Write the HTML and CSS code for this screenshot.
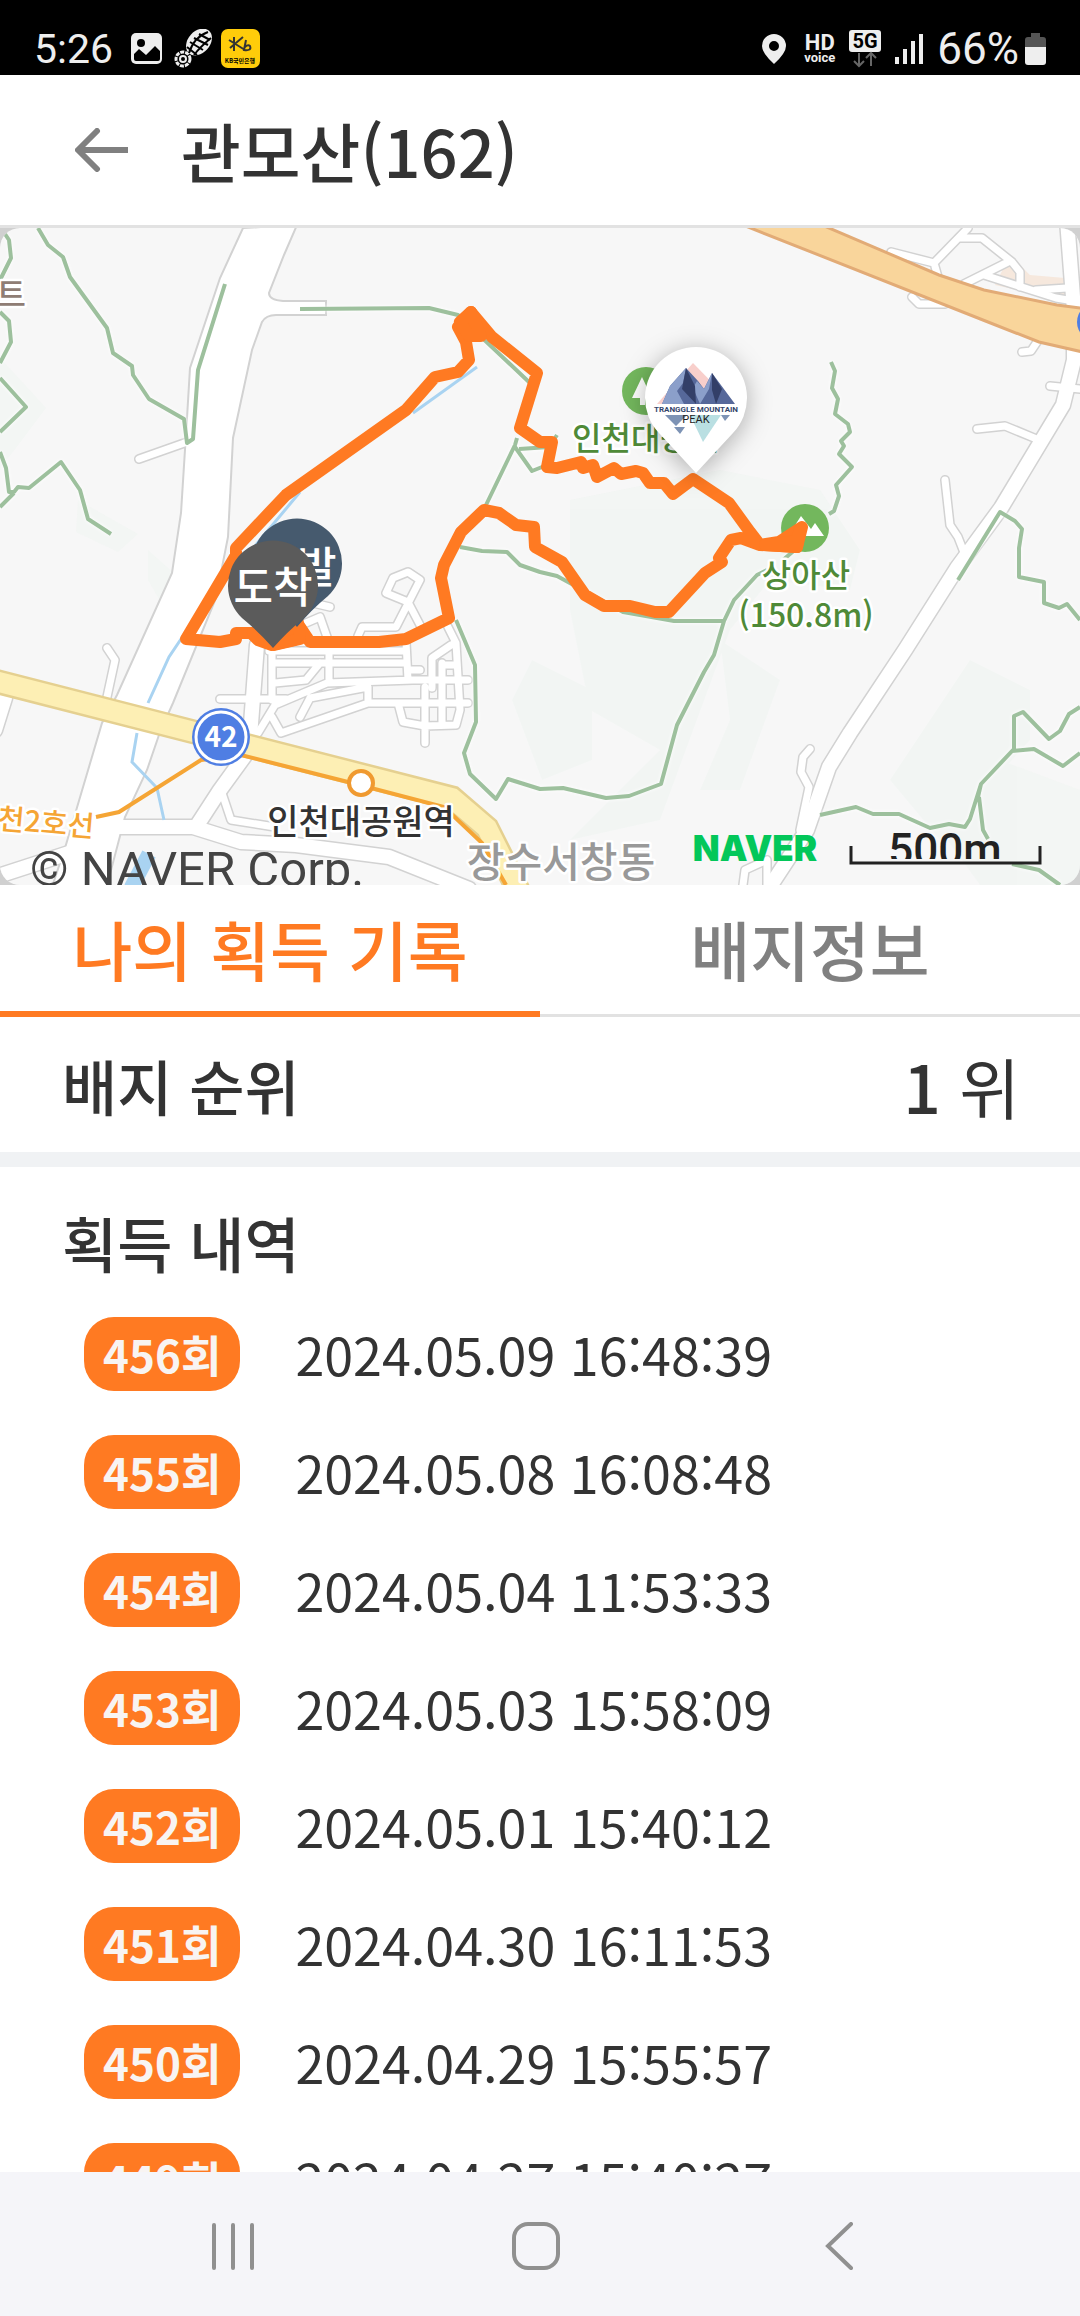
FILE: index.html
```html
<!DOCTYPE html>
<html lang="ko">
<head>
    <meta charset="UTF-8">
    <meta name="viewport" content="width=device-width, initial-scale=1.0">
    <title>관모산(162)</title>
    <link rel="stylesheet" href="styles.css">
</head>
<body>
    <div class="status-bar">
        <div class="status-left">
            <span class="clock">5:26</span>
            <svg width="31" height="31" viewBox="0 0 31 31">
                <rect width="31" height="31" rx="5" fill="#eee"/>
                <circle cx="10" cy="10" r="4" fill="#000"/>
                <path d="M3 21l5-5 7 6 9-9 5 5v8q0 2-2 2H5q-2 0-2-2z" fill="#000"/>
            </svg>
            <svg class="shoe" width="39" height="39" viewBox="0 0 39 39" fill="none" stroke="#eee">
                <circle cx="9" cy="30" r="7" stroke-width="3" stroke-dasharray="4 1"/>
                <circle cx="9" cy="30" r="3" stroke-width="2"/>
                <ellipse cx="25" cy="13" rx="11" ry="15" transform="rotate(42 25 13)" fill="#eee" stroke="none"/>
                <path d="M15 24Q20 8 34 3M20 26Q26 18 37 9M13 18l10 8M16 13l13 8M20 9l14 7M25 5l11 6" stroke="#000" stroke-width="2"/>
            </svg>
            <svg width="39" height="39" viewBox="0 0 39 39">
                <rect width="39" height="39" rx="7" fill="#ffcc0a"/>
                <path d="M13 8v14M8 11l16 10M22 8L9 19M25 11l-2 10q8 1 6-4-2-2-5 1" fill="none" stroke="#333" stroke-width="2"/>
                <text x="19" y="34" class="kb-text">KB국민은행</text>
            </svg>
        </div>
        <div class="status-right">
            <svg width="24" height="30" viewBox="0 0 24 30">
                <path fill-rule="evenodd" d="M12 0a12 12 0 0 1 12 12q0 7-12 18Q0 19 0 12A12 12 0 0 1 12 0zm0 7a5 5 0 1 0 0 10 5 5 0 0 0 0-10z" fill="#eee"/>
            </svg>
            <div class="hd"><b>HD</b><small>voice</small></div>
            <svg width="32" height="38" viewBox="0 0 32 38">
                <rect width="32" height="22" rx="3" fill="#eee"/>
                <text x="16" y="18" class="net-text">5G</text>
                <path d="M10 23v13M5 31l5 5 5-5M22 36V23M17 28l5-5 5 5" fill="none" stroke="#666" stroke-width="2"/>
            </svg>
            <svg width="28" height="30" viewBox="0 0 28 30" stroke="#eee" stroke-width="4">
                <path d="M2 23v7M10 15v15M18 7v23M26 0v30"/>
            </svg>
            <div class="battery">
                <span>66%</span>
                <svg width="21" height="32" viewBox="0 0 21 32">
                    <path d="M6 0h9v4h3q3 0 3 3v7H0V7q0-3 3-3h3z" fill="#555"/>
                    <path d="M0 14h21v15q0 3-3 3H3q-3 0-3-3z" fill="#eee"/>
                </svg>
            </div>
        </div>
    </div>

    <header class="header">
        <button class="back-btn" aria-label="뒤로">
            <svg width="54" height="44" viewBox="0 0 54 44" fill="none" stroke="#808080" stroke-width="6">
                <path d="M53 22H4"/>
                <path d="M22 3L3 22l19 19" stroke-linecap="round" stroke-linejoin="round"/>
            </svg>
        </button>
        <h1>관모산(162)</h1>
    </header>

    <div class="map">
        <svg viewBox="0 228 1080 657" role="img" aria-label="코스 지도">
            <defs>
                <!-- small streets are drawn twice: grey casing, then white on top -->
                <g id="streets">
                    <path d="M139 459L190 441M107 648l8 12-8 37M220 699h66M258 733l17-28M272 650v50M275 663h131M269 651h135M275 683l31-3 14-17M275 705l52-22 86-3 55 0M272 717l9 16 87-30h100M300 717l10-19M310 698l58-11v16M329 647v36M406 642l2 38M408 670h12M425 687v56M448 627l8 16 4 67-4 15-31 1-22-4-5-19M451 645l-19 13v30M442 663v62M442 665h15"/>
                    <path d="M358 636l4-9h34l24-47-12-8-15 6-7 15 22 9 12 23M306 623l14-6 7 20M313 603l17 4M222 793l9 27 44 7"/>
                    <path d="M891 252l43 11 34-35M960 238h22l30 24 8 10v15M934 263l4 14M964 284l44-22M984 275l72 23 24 4M1036 290l31-2M912 297l7 7h26M1022 352l9-1 8-12M1050 386l30 3M977 429l28-3 34 14M945 480l5 45 8 12 7 18M810 749l-7 8-2 15 8 15-9 43M743 885l2-15 22-10v25"/>
                </g>
                <path id="main-streets" d="M-5 877l74-24 45-26h79l48 15 55 3 93 12 80 32M257 645l-8 105-29 40-24 37M1067 220l7 90 0 50-11 45-62 103-44 60-52 82-55 83-21 34-22 63-36 55M-5 730l10-32"/>
            </defs>
            <rect y="228" width="1080" height="657" fill="#f7f7f7"/>

            <!-- terrain shading -->
            <g fill="#f0f5f2" opacity=".6">
                <path d="M0 358l26 28 20 22-30 40-16 20zM78 500l60 34-20 18-42-20zM148 550l45 40-5 60-40-70z"/>
                <path d="M570 500l150-30 100 20 40 60-10 40-80-10-40 50-70 190-90 20 50-50 40-40-70-40-20-100zM700 790l30-70-10-80 60 40-40 110zM930 720l40-60 60 30v50l-90 100-50-60z"/>
                <path d="M512 700l20-40 60 30v70l-50 20zM940 830l60-70 80 30v95H980z"/>
            </g>
            <path d="M995 285l15-30 20 20 35 3 5 20-40-5z" fill="#f6e8dd"/>

            <use href="#streets" class="casing"/>
            <use href="#main-streets" class="casing wide"/>
            <path d="M243 228l-23 50-30 90-3 50-6 95-9 60-55 122-15 28-37 125-15 45h55l20-76 22-47 13-38 13-29 43-105 12-61 5-99 19-88 10-28q4-7 14-7h50v-14h-43q-14-1-14-8l15-38 13-30z" class="big-road"/>
            <use href="#streets" class="road"/>
            <use href="#main-streets" class="road wide"/>

            <g fill="none" stroke="#a9d3f1" stroke-width="3">
                <path d="M477 367l-64 46M300 492l-50 60M234 560l-65 97-21 46M137 733l-5 29 25 26 7 32"/>
                <path d="M149 854l-18 34" stroke-width="15"/>
            </g>

            <path d="M822 225l117 50 45 15 73 15 30 4v44l-48-11-51-20-245-97z" fill="#f9d59b" stroke="#e2ab76" stroke-width="3"/>
            <path d="M-5 681l203 52 254 65 35 30 32 64" fill="none" stroke="#e5d090" stroke-width="25"/>
            <path d="M-5 681l203 52 254 65 35 30 32 64" fill="none" stroke="#fdefb4" stroke-width="20"/>
            <path d="M96 817l23-5 82-52 40-5 107 27 96 25 38 36 24 42" fill="none" stroke="#f5a535" stroke-width="4"/>

            <g class="trail">
                <path d="M38 228l10 17 15 12 7 20 37 51 6 25 19 13 1 9 16 24 35 20 3 24 6-4 5-69 27-86M300 309l129-1 29 7 72 68"/>
                <path d="M5 234l4 6 2 18-11 22M0 312l9 9 2 21-11 21M0 378l26 29-26 25M0 452l6 16 3 24h5l4-5 11 1 32-26 19 28 8 29 23 15M14 493L0 507"/>
                <path d="M517 438l-2 7-29 60M515 447l17 24 20-8M519 449l30-2 8-12M460 547l22 4 25 1 13 13 20 7 17 4 66 36 51 9h50"/>
                <path d="M767 570l-10 5-23 25-10 21-10 34-10 17-27 53-16 59-32 12-23 2-43-10-23 1-32-10-12 20-26-25-6-21 12-31-1-57-19-45M797 548l-14 12"/>
                <path d="M831 362l4 9-3 17 6 11-3 15 13 10 2 8-9 9 3 5-5 8 13 13-16 18 3 11-5 15-5 3"/>
                <path d="M958 580l42-68 15 9 7 8-3 19v29l25 5v21l15 5 8-4 13 16M820 815l36-8 17 7h26l31 14 19-4 16 3 5-8 11-35 33-35v-33l9-4 26 27 11-8 9-17 11-7M978 797l3-13 31-33 22-2 29 17 17-13M979 797l4 33 5 9M1012 864l27 6 21 15"/>
            </g>

            <!-- places -->
            <circle cx="646" cy="391" r="24" fill="#73b75d"/>
            <path d="M642 377l10 21h-7v7h-5v-7h-8z" fill="#fff"/>
            <text x="572" y="450" class="label green">인천대공원</text>
            <circle cx="805" cy="528" r="24" fill="#73b75d"/>
            <path d="M788 536l13-20 10 13 4-6 9 13z" fill="#fff"/>
            <text x="806" y="587" class="label green mid">상아산</text>
            <text x="806" y="627" class="label green mid">(150.8m)</text>
            <text x="26" y="306" class="label brown">트</text>
            <text x="-3" y="829" class="label rail" transform="rotate(5 0 829)">천2호선</text>
            <circle cx="361" cy="783" r="12" fill="#fff" stroke="#f09a30" stroke-width="4"/>
            <text x="361" y="834" class="label station mid">인천대공원역</text>
            <text x="561" y="877" class="label district mid">장수서창동</text>
            <circle cx="221" cy="737" r="29" fill="#4f7ee3"/>
            <circle cx="221" cy="737" r="25" fill="none" stroke="#fff" stroke-width="3"/>
            <text x="221" y="747" class="route-no">42</text>
            <circle cx="1096" cy="322" r="19" fill="#4f7ee3"/>

            <!-- recorded track -->
            <path class="track" d="M471 312l21 25 45 36-17 55 20 14h12l-5 25 10 1 24-6 2 6 10-3 4 12 17-9 7 6 15-3 7 2 7 10h14l9 11 20-15 36 24 21 29 10 13 37 2 5-20-23 15-19 3-19-7-10 2-12 18 3 4-17 11-36 39h-14l-25-6h-26l-19-11-23-33-27-15-1-20-18-2-17-12-15-3-23 22-17 33-3 13 8 40-43 21-27 3h-69l-12-18-4 16-22 5-14-5-7-7h-15v6l-16 3-34-3 50-84v-7l50-53 120-85 29-33 23-5 11-12-3-18-8-15z"/>
            <path d="M460 322l11-10 10 24h-12z" class="track filled"/>
            <path d="M765 545l32-4 3-12-3 18z" class="track filled"/>
            <path d="M253 633l21 12 26-6-3-22z" class="track filled"/>

            <!-- pins -->
            <path d="M297 627q-14-17-31-31a45 45 0 1 1 62 0q-17 14-31 31z" fill="#465a6e"/>
            <text x="297" y="583" class="pin-text">출발</text>
            <path d="M273 648q-14-16-31-30a45 45 0 1 1 62 0q-17 14-31 30z" fill="#5b5b5b"/>
            <text x="273" y="603" class="pin-text">도착</text>

            <path d="M696 473l-37-40a51 51 0 1 1 74 0z" fill="#fff" class="badge-pin"/>
            <path d="M657 404l36-41 40 41z" fill="#f8cfcb"/>
            <path d="M662 404l8-18 16-18 12 13 6 8 8-16 23 31z" fill="#56689a"/>
            <path d="M670 386l16-18-3 15-6 8 7 13h-22zM712 373l-3 16-9 15-7-16 4-7 7 8z" fill="#8b9fca"/>
            <path d="M686 368l9 18 1 18-14-15zM712 373l10 16-6 15-4-14z" fill="#333f68"/>
            <path d="M665 415h22l-11 11zM674 427h11l-5 7zM721 415h9l-5 6z" fill="#7d93b5"/>
            <path d="M690 415h31l-18 27z" fill="#b9dfe2"/>
            <text x="696" y="412" class="badge-text">TRANGGLE MOUNTAIN</text>
            <text x="696" y="423" class="badge-text peak">PEAK</text>

            <text x="755" y="861" class="naver">NAVER</text>
            <clipPath id="scale-clip"><rect x="850" y="820" width="190" height="39"/></clipPath>
            <text x="945" y="865" class="scale-text" clip-path="url(#scale-clip)">500m</text>
            <path d="M851 846v17h189v-17" fill="none" stroke="#222" stroke-width="3"/>
            <text x="30" y="886" class="copyright">© NAVER Corp.</text>
        </svg>
    </div>

    <div class="tabs" role="tablist">
        <button class="tab active" role="tab" aria-selected="true">나의 획득 기록</button>
        <button class="tab" role="tab" aria-selected="false">배지정보</button>
    </div>

    <main class="content">
        <section class="rank">
            <h2>배지 순위</h2>
            <p><b>1</b> 위</p>
        </section>
        <section class="history">
            <h2>획득 내역</h2>
            <ul>
                <li><span class="count">456회</span><time>2024.05.09 16:48:39</time></li>
                <li><span class="count">455회</span><time>2024.05.08 16:08:48</time></li>
                <li><span class="count">454회</span><time>2024.05.04 11:53:33</time></li>
                <li><span class="count">453회</span><time>2024.05.03 15:58:09</time></li>
                <li><span class="count">452회</span><time>2024.05.01 15:40:12</time></li>
                <li><span class="count">451회</span><time>2024.04.30 16:11:53</time></li>
                <li><span class="count">450회</span><time>2024.04.29 15:55:57</time></li>
                <li><span class="count">449회</span><time>2024.04.27 15:40:27</time></li>
            </ul>
        </section>
    </main>

    <nav class="nav-bar">
        <button aria-label="최근 앱">
            <svg width="48" height="48" viewBox="0 0 48 48" stroke="#909090" stroke-width="4" stroke-linecap="round">
                <path d="M5 3v43M24 3v43M43 3v43"/>
            </svg>
        </button>
        <button aria-label="홈">
            <svg width="48" height="48" viewBox="0 0 48 48" fill="none" stroke="#909090" stroke-width="4">
                <rect x="2" y="2" width="44" height="44" rx="14"/>
            </svg>
        </button>
        <button aria-label="이전">
            <svg width="48" height="48" viewBox="0 0 48 48" fill="none" stroke="#909090" stroke-width="4" stroke-linecap="round">
                <path d="M36 2L13 24l23 22"/>
            </svg>
        </button>
    </nav>
</body>
</html>
```

FILE: styles.css
```css
* {
    box-sizing: border-box;
}

body {
    display: flex;
    flex-direction: column;
    height: 100vh;
    margin: 0;
    background-color: #fff;
    color: #333;
    font-family: "Noto Sans CJK KR", sans-serif;
}

h1, h2, p, ul {
    margin: 0;
    padding: 0;
}

button {
    padding: 0;
    border: none;
    background: none;
    font-family: inherit;
    cursor: pointer;
}

svg {
    display: block;
}

.status-bar {
    display: flex;
    flex-shrink: 0;
    justify-content: space-between;
    height: 75px;
    padding: 22px 34px 0;
    background-color: #000;
    color: #eee;
    font-family: Roboto, sans-serif;
}

.status-left, .status-right {
    display: flex;
    align-items: center;
}

.clock {
    margin-right: 18px;
    font-size: 41px;
}

.shoe {
    margin: 0 8px 0 12px;
}

.status-right {
    gap: 14px;
}

.hd {
    display: flex;
    flex-direction: column;
    align-items: center;
    margin-left: 4px;
}

.hd b {
    font-size: 22px;
    line-height: 18px;
}

.hd small {
    font-size: 13px;
    font-weight: bold;
    line-height: 12px;
}

.battery {
    display: flex;
    align-items: center;
    gap: 6px;
    font-size: 44px;
}

.kb-text {
    font: bold 6px "Noto Sans CJK KR", sans-serif;
    text-anchor: middle;
}

.net-text {
    font: bold 20px Roboto, sans-serif;
    text-anchor: middle;
}

.header {
    display: flex;
    flex-shrink: 0;
    align-items: center;
    gap: 52px;
    height: 153px;
    padding: 0 75px;
    border-bottom: 3px solid #e2e2e2;
}

.header h1 {
    font-size: 65px;
    font-weight: 500;
    line-height: 100px;
}

.map {
    flex-shrink: 0;
    background-color: #d0d0d0;
}

.map svg {
    width: 100%;
    height: auto;
    border-radius: 20px;
}

.casing, .road, .trail, .track {
    fill: none;
    stroke-linecap: round;
    stroke-linejoin: round;
}

.casing {
    stroke: #d2d2d2;
    stroke-width: 10px;
}

.road {
    stroke: #fff;
    stroke-width: 7px;
}

.casing.wide {
    stroke-width: 17px;
}

.road.wide {
    stroke-width: 14px;
}

.big-road {
    fill: #fff;
    stroke: #d2d2d2;
    stroke-width: 2px;
}

.trail {
    stroke: #9dc09d;
    stroke-width: 4px;
    stroke-linecap: butt;
    filter: drop-shadow(0 0 2px #fff);
}

.track {
    stroke: #ff7a22;
    stroke-width: 12px;
}

.track.filled {
    fill: #ff7a22;
}

.label {
    font-weight: 500;
    paint-order: stroke;
    stroke: #fff;
    stroke-width: 5px;
    stroke-linejoin: round;
}

.mid {
    text-anchor: middle;
}

.green {
    fill: #4f8a38;
    font-size: 32px;
}

.brown {
    fill: #8f7d74;
    font-size: 32px;
    text-anchor: end;
}

.rail {
    fill: #f5a535;
    font-size: 29px;
}

.station {
    fill: #333;
    font-size: 34px;
}

.district {
    fill: #999;
    font-size: 41px;
}

.route-no {
    fill: #fff;
    font-size: 28px;
    font-weight: bold;
    text-anchor: middle;
}

.pin-text {
    fill: #fff;
    font-size: 43px;
    font-weight: 500;
    text-anchor: middle;
}

.badge-pin {
    filter: drop-shadow(0 4px 12px rgba(0, 0, 0, 0.3));
}

.badge-text {
    fill: #34456b;
    font: bold 8px Roboto, sans-serif;
    text-anchor: middle;
}

.badge-text.peak {
    fill: #222;
    font-size: 11px;
    font-weight: normal;
}

.naver {
    fill: #03c75a;
    font: 900 35px Inter, sans-serif;
    text-anchor: middle;
}

.scale-text {
    fill: #222;
    font: 500 44px Roboto, sans-serif;
    text-anchor: middle;
}

.copyright {
    fill: #444;
    font: 49px Roboto, sans-serif;
}

.tabs {
    display: flex;
    flex-shrink: 0;
    height: 132px;
}

.tab {
    flex: 1;
    padding-bottom: 3px;
    border-bottom: 3px solid #e2e2e2;
    color: #808080;
    font-size: 65px;
    font-weight: 500;
    line-height: 100px;
}

.tab.active {
    padding-bottom: 0;
    border-bottom: 6px solid #ff7a22;
    color: #ff7a22;
}

.content {
    flex: 1;
    min-height: 0;
    overflow: hidden;
}

.content h2 {
    font-size: 60px;
    font-weight: 500;
    line-height: 80px;
}

.rank {
    display: flex;
    align-items: center;
    justify-content: space-between;
    height: 150px;
    padding: 0 60px 0 62px;
    border-bottom: 15px solid #f0f2f4;
}

.rank p {
    font-size: 66px;
    line-height: 80px;
}

.rank b {
    font-weight: 500;
}

.history {
    padding: 35px 62px 0;
}

.history ul {
    padding: 35px 22px 0;
    list-style-type: none;
}

.history li {
    display: flex;
    align-items: center;
    gap: 55px;
    height: 74px;
    margin-bottom: 44px;
}

.count {
    padding: 0 19px;
    border-radius: 30px;
    background-color: #ff7a22;
    color: #f8f4f2;
    font-size: 44px;
    font-weight: bold;
    line-height: 74px;
}

.history time {
    font-size: 52px;
    line-height: 74px;
}

.nav-bar {
    display: flex;
    flex-shrink: 0;
    align-items: center;
    justify-content: space-between;
    height: 144px;
    padding: 4px 217px 0 209px;
    background-color: #f5f5f9;
}
```
